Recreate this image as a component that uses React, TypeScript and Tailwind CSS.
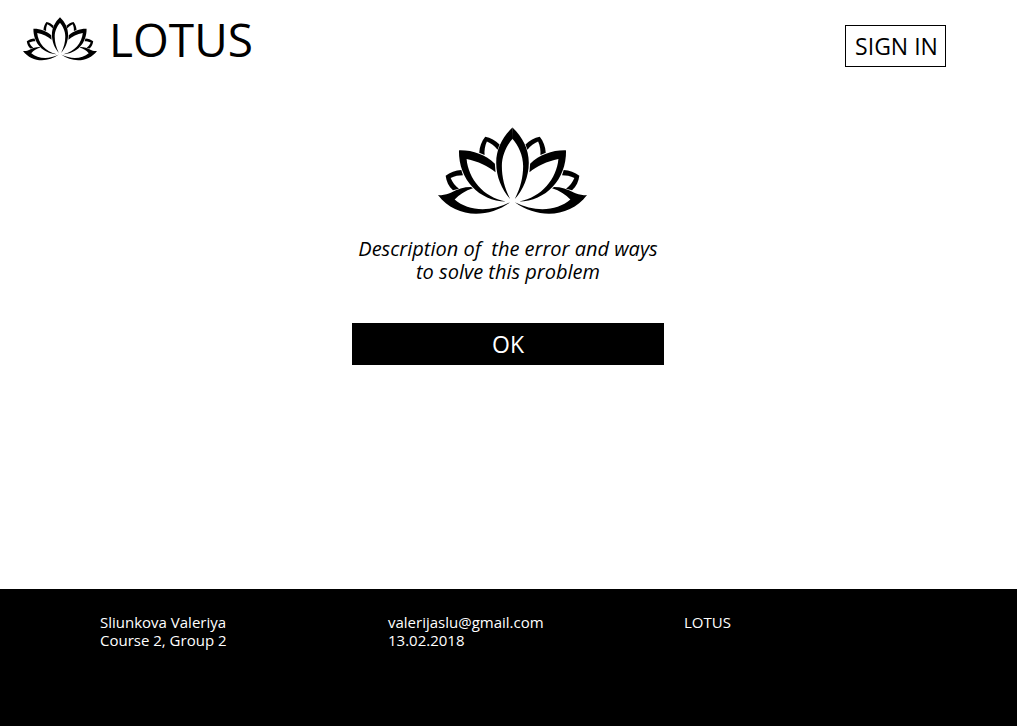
function LotusHalf() {
  return (
    <>
      <path d="M246 22 C215 52 197 87 197 128 C197 170 214 210 239 237 C222 204 214 172 214 138 C214 106 228 76 247 55 Z" />
      <path d="M85 91 C126 90 164 104 193 131 L195 157 C173 138 142 124 108 117 C113 176 158 232 226 245 C146 242 84 180 85 91 Z" />
      <path d="M164 50 C180 53 195 61 207 73 L201 89 C192 77 181 69 169 64 C163 77 161 91 162 105 L146 98 C147 80 153 64 164 50 Z" />
      <path d="M45 167 C58 157 75 151 92 150 L97 166 C85 166 72 168 60 174 C65 187 74 198 85 206 L67 211 C54 199 47 184 45 167 Z" />
      <path d="M22 225 C38 227 50 224 62 218 C80 207 100 201 121 201 L127 205 C104 212 86 224 72 239 C112 274 179 278 239 247 C168 298 73 293 22 225 Z" />
    </>
  );
}

function Lotus({ className }: { className: string }) {
  return (
    <svg viewBox="22 22 448 262" className={className} fill="currentColor" aria-hidden="true">
      <LotusHalf />
      <g transform="matrix(-1 0 0 1 492 0)">
        <LotusHalf />
      </g>
    </svg>
  );
}

export default function App() {
  return (
    <div className="flex min-h-screen flex-col bg-white pr-[7px] pb-px font-['Open_Sans',sans-serif] text-black">
      <header className="flex items-start justify-between pt-[17px] pr-[71px] pl-[23px]">
        <a href="#" className="flex items-start gap-3">
          <Lotus className="h-11 w-[74px]" />
          <span className="text-[46px] leading-[44px]">LOTUS</span>
        </a>
        <button className="mt-2 h-[42px] w-[101px] border border-black pl-0.5 text-[23px] leading-none whitespace-nowrap">
          SIGN IN
        </button>
      </header>

      <main className="flex flex-1 flex-col items-center pt-[60px] pr-px">
        <Lotus className="ml-2 h-[88px] w-[149px]" />
        <p className="mt-[22px] text-center text-[20px] leading-[23px] whitespace-pre italic">
          {"Description of  the error and ways\nto solve this problem"}
        </p>
        <button className="mt-10 h-[42px] w-[312px] bg-black text-[23px] leading-none text-white">OK</button>
      </main>

      <footer className="flex h-[137px] bg-black pt-6 pl-[100px] text-[15px] leading-[18px] text-white">
        <p className="w-72">
          Sliunkova Valeriya
          <br />
          Course 2, Group 2
        </p>
        <p className="w-[296px]">
          <a href="mailto:valerijaslu@gmail.com">valerijaslu@gmail.com</a>
          <br />
          13.02.2018
        </p>
        <p>LOTUS</p>
      </footer>
    </div>
  );
}
